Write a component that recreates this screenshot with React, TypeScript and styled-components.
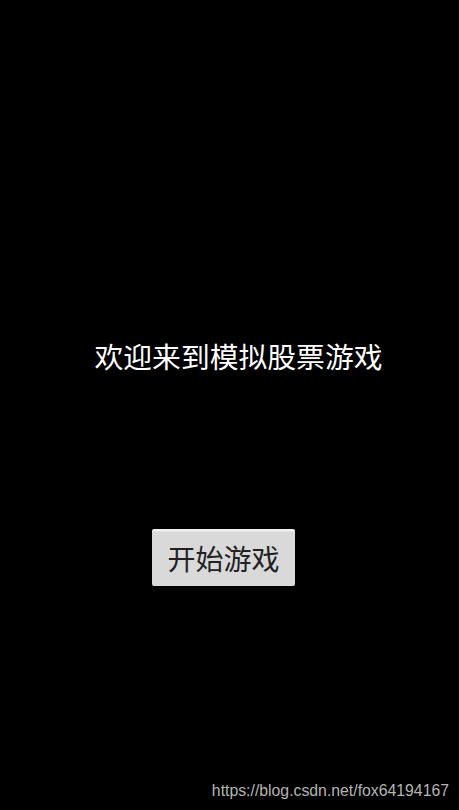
import React from "react"
import styled, { createGlobalStyle } from "styled-components"

const GlobalStyle = createGlobalStyle`
  html, body {
    margin: 0;
    padding: 0;
    background: #000;
  }
  body {
    font-family: "Noto Sans CJK SC", "Liberation Sans", sans-serif;
  }
`

const Screen = styled.div`
  position: relative;
  width: 459px;
  height: 810px;
  background: #000;
  display: flex;
  flex-direction: column;
  align-items: center;
  overflow: hidden;
`

const Title = styled.h1`
  margin: 334px 0 0 0;
  padding-left: 18px;
  font-size: 28.8px;
  font-weight: 400;
  line-height: 44px;
  color: #fff;
  letter-spacing: 0;
`

const StartButton = styled.button`
  margin: 151px 12px 0 0;
  width: 143px;
  height: 57px;
  border: none;
  border-radius: 2px;
  background: linear-gradient(#f0f0f0 0, #f0f0f0 2px, #d9d9d9 3px);
  color: #222;
  font-family: "Noto Sans CJK SC", "Liberation Sans", sans-serif;
  font-size: 28px;
  padding: 0;
  cursor: pointer;
`

const Watermark = styled.span`
  position: absolute;
  right: 10px;
  bottom: 10px;
  font-family: "Liberation Sans", Arial, sans-serif;
  font-size: 15.8px;
  color: #b4b4b4;
`

export default function App() {
  return (
    <>
      <GlobalStyle />
      <Screen>
        <Title>欢迎来到模拟股票游戏</Title>
        <StartButton>开始游戏</StartButton>
        <Watermark>https://blog.csdn.net/fox64194167</Watermark>
      </Screen>
    </>
  )
}
